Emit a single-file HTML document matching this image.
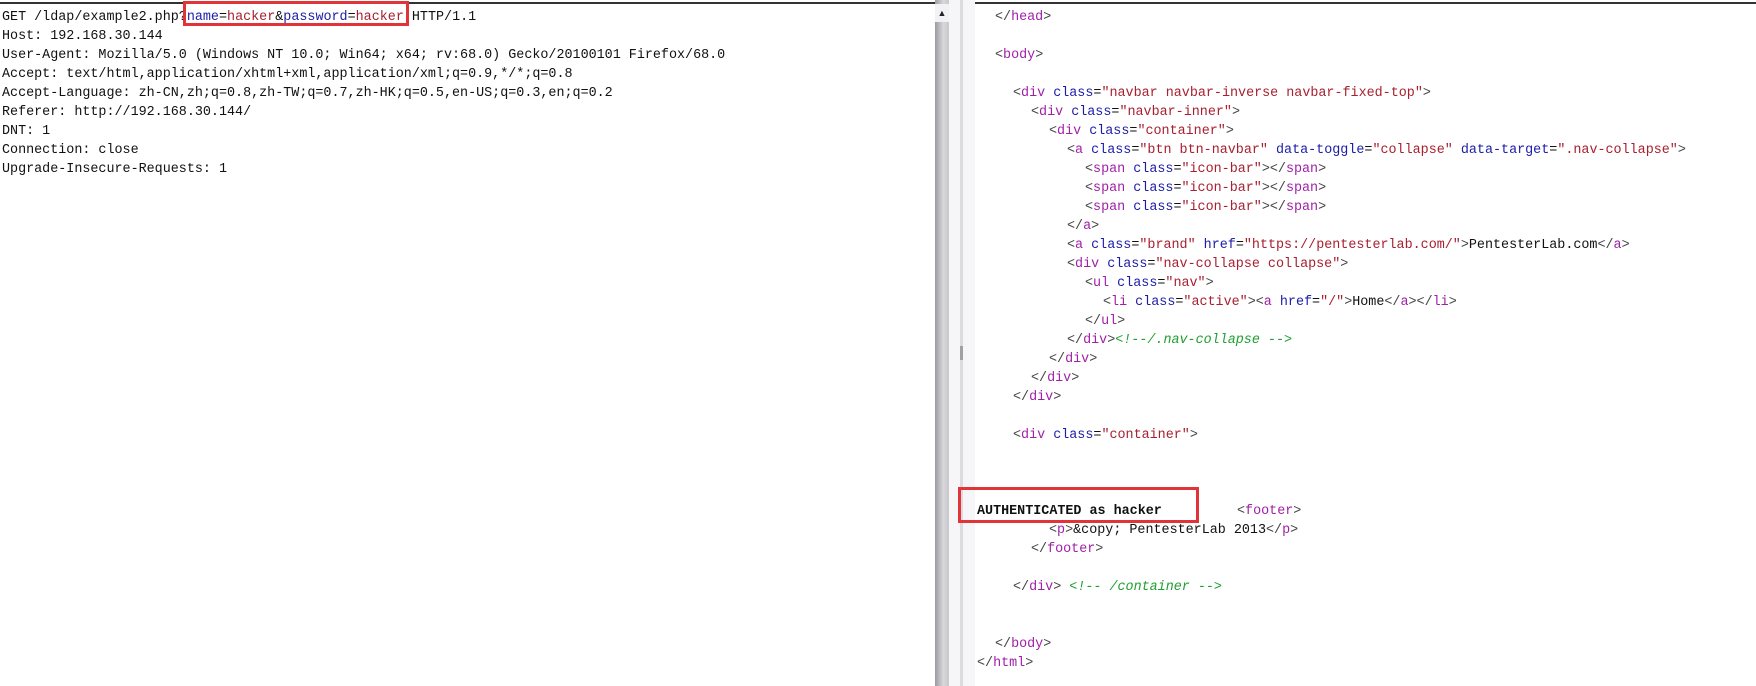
<!DOCTYPE html>
<html><head><meta charset="utf-8"><style>
html,body{margin:0;padding:0;width:1756px;height:686px;overflow:hidden;background:#fff;}
.pane{position:absolute;top:2px;font-family:"Liberation Mono","Noto Sans CJK SC",monospace;font-size:13.4px;line-height:19px;color:#111;white-space:pre;}
.l{position:absolute;left:2px;height:19px;}
.t{color:#a020a8}.a{color:#1c1ca8}.v{color:#a82030}.b{color:#444}.c{color:#20a030;font-style:italic}
.box{position:absolute;border:3px solid #e03438;box-sizing:border-box;}
</style></head><body>
<div style="position:absolute;left:0;top:2px;width:935px;height:2px;background:#333"></div>
<div style="position:absolute;left:975px;top:2px;width:781px;height:2px;background:#333"></div>
<div style="position:absolute;left:935px;top:0;width:14px;height:686px;background:linear-gradient(90deg,#9a9aa0,#d8d8dc 60%,#c8c8cc)"></div>
<div style="position:absolute;left:935px;top:4px;width:14px;height:18px;background:#f2f2f4;text-align:center;font-size:9px;line-height:18px;color:#222">▲</div>
<div style="position:absolute;left:949px;top:0;width:26px;height:686px;background:#f6f6f8"></div>
<div style="position:absolute;left:960px;top:0;width:3px;height:686px;background:#dcdce0"></div>
<div style="position:absolute;left:960px;top:346px;width:3px;height:14px;background:#a0a0a4"></div>

<div class="pane" style="left:0;width:935px;">
<div class="l" style="top:6px">GET /ldap/example2.php?<span class="a">name</span>=<span class="v">hacker</span>&amp;<span class="a">password</span>=<span class="v">hacker</span> HTTP/1.1</div>
<div class="l" style="top:25px">Host: 192.168.30.144</div>
<div class="l" style="top:44px">User-Agent: Mozilla/5.0 (Windows NT 10.0; Win64; x64; rv:68.0) Gecko/20100101 Firefox/68.0</div>
<div class="l" style="top:63px">Accept: text/html,application/xhtml+xml,application/xml;q=0.9,*/*;q=0.8</div>
<div class="l" style="top:82px">Accept-Language: zh-CN,zh;q=0.8,zh-TW;q=0.7,zh-HK;q=0.5,en-US;q=0.3,en;q=0.2</div>
<div class="l" style="top:101px">Referer: http://192.168.30.144/</div>
<div class="l" style="top:120px">DNT: 1</div>
<div class="l" style="top:139px">Connection: close</div>
<div class="l" style="top:158px">Upgrade-Insecure-Requests: 1</div>
</div>
<div class="box" style="left:183px;top:1px;width:226px;height:25px"></div>

<div class="pane" style="left:975px;width:781px;">
<div class="l" style="top:6px;left:20px"><span class="b">&lt;/</span><span class="t">head</span><span class="b">&gt;</span></div>
<div class="l" style="top:44px;left:20px"><span class="b">&lt;</span><span class="t">body</span><span class="b">&gt;</span></div>
<div class="l" style="top:82px;left:38px"><span class="b">&lt;</span><span class="t">div</span> <span class="a">class</span>=<span class="v">"navbar navbar-inverse navbar-fixed-top"</span><span class="b">&gt;</span></div>
<div class="l" style="top:101px;left:56px"><span class="b">&lt;</span><span class="t">div</span> <span class="a">class</span>=<span class="v">"navbar-inner"</span><span class="b">&gt;</span></div>
<div class="l" style="top:120px;left:74px"><span class="b">&lt;</span><span class="t">div</span> <span class="a">class</span>=<span class="v">"container"</span><span class="b">&gt;</span></div>
<div class="l" style="top:139px;left:92px"><span class="b">&lt;</span><span class="t">a</span> <span class="a">class</span>=<span class="v">"btn btn-navbar"</span> <span class="a">data-toggle</span>=<span class="v">"collapse"</span> <span class="a">data-target</span>=<span class="v">".nav-collapse"</span><span class="b">&gt;</span></div>
<div class="l" style="top:158px;left:110px"><span class="b">&lt;</span><span class="t">span</span> <span class="a">class</span>=<span class="v">"icon-bar"</span><span class="b">&gt;&lt;/</span><span class="t">span</span><span class="b">&gt;</span></div>
<div class="l" style="top:177px;left:110px"><span class="b">&lt;</span><span class="t">span</span> <span class="a">class</span>=<span class="v">"icon-bar"</span><span class="b">&gt;&lt;/</span><span class="t">span</span><span class="b">&gt;</span></div>
<div class="l" style="top:196px;left:110px"><span class="b">&lt;</span><span class="t">span</span> <span class="a">class</span>=<span class="v">"icon-bar"</span><span class="b">&gt;&lt;/</span><span class="t">span</span><span class="b">&gt;</span></div>
<div class="l" style="top:215px;left:92px"><span class="b">&lt;/</span><span class="t">a</span><span class="b">&gt;</span></div>
<div class="l" style="top:234px;left:92px"><span class="b">&lt;</span><span class="t">a</span> <span class="a">class</span>=<span class="v">"brand"</span> <span class="a">href</span>=<span class="v">"https://pentesterlab.com/"</span><span class="b">&gt;</span>PentesterLab.com<span class="b">&lt;/</span><span class="t">a</span><span class="b">&gt;</span></div>
<div class="l" style="top:253px;left:92px"><span class="b">&lt;</span><span class="t">div</span> <span class="a">class</span>=<span class="v">"nav-collapse collapse"</span><span class="b">&gt;</span></div>
<div class="l" style="top:272px;left:110px"><span class="b">&lt;</span><span class="t">ul</span> <span class="a">class</span>=<span class="v">"nav"</span><span class="b">&gt;</span></div>
<div class="l" style="top:291px;left:128px"><span class="b">&lt;</span><span class="t">li</span> <span class="a">class</span>=<span class="v">"active"</span><span class="b">&gt;&lt;</span><span class="t">a</span> <span class="a">href</span>=<span class="v">"/"</span><span class="b">&gt;</span>Home<span class="b">&lt;/</span><span class="t">a</span><span class="b">&gt;&lt;/</span><span class="t">li</span><span class="b">&gt;</span></div>
<div class="l" style="top:310px;left:110px"><span class="b">&lt;/</span><span class="t">ul</span><span class="b">&gt;</span></div>
<div class="l" style="top:329px;left:92px"><span class="b">&lt;/</span><span class="t">div</span><span class="b">&gt;</span><span class="c">&lt;!--/.nav-collapse --&gt;</span></div>
<div class="l" style="top:348px;left:74px"><span class="b">&lt;/</span><span class="t">div</span><span class="b">&gt;</span></div>
<div class="l" style="top:367px;left:56px"><span class="b">&lt;/</span><span class="t">div</span><span class="b">&gt;</span></div>
<div class="l" style="top:386px;left:38px"><span class="b">&lt;/</span><span class="t">div</span><span class="b">&gt;</span></div>
<div class="l" style="top:424px;left:38px"><span class="b">&lt;</span><span class="t">div</span> <span class="a">class</span>=<span class="v">"container"</span><span class="b">&gt;</span></div>
<div class="l" style="top:500px;left:2px;font-weight:bold">AUTHENTICATED as hacker</div>
<div class="l" style="top:500px;left:262px"><span class="b">&lt;</span><span class="t">footer</span><span class="b">&gt;</span></div>
<div class="l" style="top:519px;left:74px"><span class="b">&lt;</span><span class="t">p</span><span class="b">&gt;</span>&amp;copy; PentesterLab 2013<span class="b">&lt;/</span><span class="t">p</span><span class="b">&gt;</span></div>
<div class="l" style="top:538px;left:56px"><span class="b">&lt;/</span><span class="t">footer</span><span class="b">&gt;</span></div>
<div class="l" style="top:576px;left:38px"><span class="b">&lt;/</span><span class="t">div</span><span class="b">&gt;</span> <span class="c">&lt;!-- /container --&gt;</span></div>
<div class="l" style="top:633px;left:20px"><span class="b">&lt;/</span><span class="t">body</span><span class="b">&gt;</span></div>
<div class="l" style="top:652px;left:2px"><span class="b">&lt;/</span><span class="t">html</span><span class="b">&gt;</span></div>
</div>
<div class="box" style="left:958px;top:487px;width:241px;height:36px"></div>
</body></html>
